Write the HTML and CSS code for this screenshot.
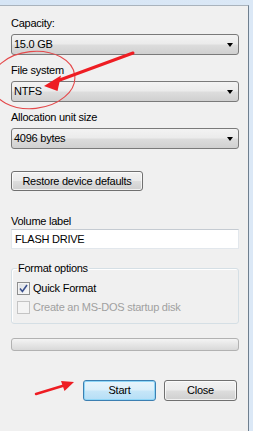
FILE: index.html
```html
<!DOCTYPE html>
<html lang="en">
<head>
  <meta charset="UTF-8">
  <title>Format FLASH DRIVE</title>
  <link rel="stylesheet" href="styles.css">
</head>
<body>
  <div class="window">
    <div class="field">
      <div class="caption">Capacity:</div>
      <div class="combo"><span>15.0 GB</span><i class="drop"></i></div>
    </div>
    <div class="field">
      <div class="caption">File system</div>
      <div class="combo"><span>NTFS</span><i class="drop"></i></div>
    </div>
    <div class="field">
      <div class="caption">Allocation unit size</div>
      <div class="combo"><span>4096 bytes</span><i class="drop"></i></div>
    </div>

    <button class="btn restore">Restore device defaults</button>

    <div class="caption volume">Volume label</div>
    <div class="textbox">FLASH DRIVE</div>

    <fieldset class="options">
      <legend>Format options</legend>
      <div class="check-row">
        <span class="check checked">
          <svg width="9" height="9" viewBox="0 0 9 9"><path d="M1 4.6 L3.4 7.4 L8 1" fill="none" stroke="#3a4f8c" stroke-width="1.6"/></svg>
        </span>
        Quick Format
      </div>
      <div class="check-row disabled">
        <span class="check"></span>
        Create an MS-DOS startup disk
      </div>
    </fieldset>

    <div class="progress"></div>

    <div class="actions">
      <button class="btn default">Start</button>
      <button class="btn">Close</button>
    </div>
  </div>

  <!-- red annotations drawn on top of the screenshot -->
  <svg class="marks" width="253" height="431" viewBox="0 0 253 431">
    <ellipse cx="33" cy="80" rx="42" ry="28.5" transform="rotate(-6 33 80)" fill="none" stroke="#e4494b" stroke-width="1.1"/>
    <line x1="133" y1="53" x2="57" y2="81" stroke="#ee1d23" stroke-width="3" stroke-linecap="round"/>
    <polygon points="44,86 61,75.5 57.5,91" fill="#ee1d23"/>
    <line x1="36" y1="394" x2="64" y2="385.5" stroke="#ee1d23" stroke-width="2.5" stroke-linecap="round"/>
    <polygon points="74,382 61,381 64.5,391" fill="#ee1d23"/>
  </svg>
</body>
</html>
```

FILE: styles.css
```css
html,
body {
  margin: 0;
  padding: 0;
}

body {
  position: relative;
  height: 431px;
  overflow: hidden;
  background: linear-gradient(to right, #d6e5f5, #dbe8f6);
  font: 11px/15px "Liberation Sans", Arial, sans-serif;
  letter-spacing: -0.25px;
  color: #000;
}

.window {
  margin-top: 5px;
  width: 249px;
  height: 426px;
  box-sizing: border-box;
  padding: 10px 9px 0 11px;
  background: #f0f0f0;
  border-top: 1px solid #a9b3bd;
  border-right: 1px solid #6f7f8f;
}

.field + .field {
  margin-top: 8px;
}

.caption {
  height: 15px;
  margin-bottom: 3px;
}

.combo {
  display: flex;
  align-items: center;
  justify-content: space-between;
  height: 21px;
  box-sizing: border-box;
  padding: 0 5px 0 2px;
  border: 1px solid #7a7a7a;
  border-radius: 3px;
  background: linear-gradient(#f3f3f3 0%, #ebebeb 48%, #dddddd 52%, #d0d0d0 100%);
}

.drop {
  width: 0;
  height: 0;
  border-left: 3.5px solid transparent;
  border-right: 3.5px solid transparent;
  border-top: 4px solid #000;
  margin-top: 1px;
}

.btn {
  height: 21px;
  padding: 0;
  font: inherit;
  letter-spacing: inherit;
  color: #000;
  border: 1px solid #707070;
  border-radius: 3px;
  background: linear-gradient(#f2f2f2 0%, #ebebeb 48%, #dddddd 52%, #cfcfcf 100%);
  box-shadow: inset 0 0 0 1px rgba(255, 255, 255, 0.7);
}

.restore {
  display: block;
  width: 132px;
  height: 20px;
  margin-top: 22px;
}

.volume {
  margin-top: 23px;
  margin-bottom: 0;
}

.textbox {
  height: 20px;
  box-sizing: border-box;
  padding: 0 3px;
  line-height: 18px;
  background: #fff;
  border: 1px solid #e2e7ec;
  border-top-color: #c5cbd2;
}

.options {
  margin: 12px 0 0 0;
  padding: 3px 4px 6px 5px;
  border: 1px solid #d5dfe5;
  border-radius: 3px;
  box-shadow: inset 1px 1px 0 #fff;
}

.options legend {
  padding: 0 1px;
  line-height: 15px;
}

.check-row {
  display: flex;
  align-items: center;
  gap: 3px;
  height: 19px;
}

.check {
  display: flex;
  align-items: center;
  justify-content: center;
  width: 13px;
  height: 13px;
  box-sizing: border-box;
  border: 1px solid #8e8f8f;
  background: linear-gradient(135deg, #dcdfe3, #fafafa);
  box-shadow: inset 0 0 0 1px #f4f4f4;
}

.disabled {
  color: #a0a0a0;
}

.disabled .check {
  border-color: #c4c4c4;
  background: #f4f4f4;
}

.progress {
  height: 13px;
  margin-top: 14px;
  box-sizing: border-box;
  border: 1px solid #b2b2b2;
  border-radius: 3px;
  background: linear-gradient(#f4f4f4 0%, #e6e6e6 50%, #d9d9d9 100%);
}

.actions {
  display: flex;
  justify-content: flex-end;
  gap: 8px;
  margin-top: 29px;
  padding-right: 2px;
}

.actions .btn {
  width: 73px;
}

.btn.default {
  border-color: #3c7fb1;
  background: linear-gradient(#e8f5fc 0%, #dbeffa 48%, #c6e6f8 52%, #b5def6 100%);
  box-shadow: inset 0 0 0 1px #8fd6f7;
}

.marks {
  position: absolute;
  top: 0;
  left: 0;
  pointer-events: none;
}
```
